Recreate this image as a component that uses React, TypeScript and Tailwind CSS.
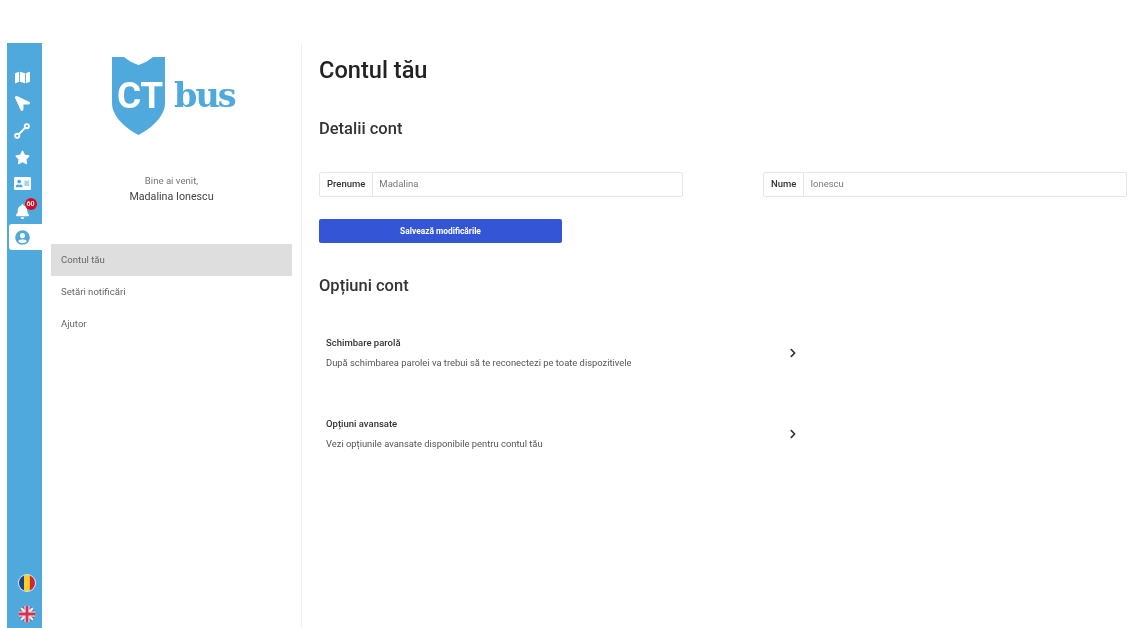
import { FaAddressCard, FaBell, FaChevronRight, FaLocationArrow, FaMap, FaStar, FaUserCircle } from "react-icons/fa";

function RouteIcon() {
  return (
    <svg viewBox="0 0 16 16" className="w-[16px] h-[16px]" fill="none" stroke="white" strokeWidth="1.9">
      <circle cx="3.2" cy="12.8" r="2.1" />
      <circle cx="12.800" cy="3.2" r="2.1" />
      <path d="M4.700 11.300 11.300 4.700" />
    </svg>
  );
}

function RomaniaFlag() {
  return (
    <svg viewBox="0 0 18 18" className="w-[18px] h-[18px]">
      <clipPath id="ro">
        <circle cx="9" cy="9" r="8" />
      </clipPath>
      <circle cx="9" cy="9" r="9" fill="#dbe8f2" />
      <g clipPath="url(#ro)">
        <rect x="0" y="0" width="6.2" height="18" fill="#1f3f8f" />
        <rect x="6.2" y="0" width="5.6" height="18" fill="#fbd116" />
        <rect x="11.8" y="0" width="6.2" height="18" fill="#d0263a" />
      </g>
    </svg>
  );
}

function UkFlag() {
  return (
    <svg viewBox="0 0 18 18" className="w-[18px] h-[18px]">
      <clipPath id="uk">
        <circle cx="9" cy="9" r="8.5" />
      </clipPath>
      <g clipPath="url(#uk)">
        <path d="M0 0 18 18M18 0 0 18" stroke="#3f6fb0" strokeWidth="5" />
        <path d="M0 0 18 18M18 0 0 18" stroke="#f3e4ea" strokeWidth="2.4" />
        <path d="M9 0V18M0 9H18" stroke="#f3e4ea" strokeWidth="5" />
        <path d="M9 0V18M0 9H18" stroke="#d8324a" strokeWidth="2.8" />
      </g>
    </svg>
  );
}

function Rail() {
  return (
    <aside className="w-[35px] shrink-0 bg-[#4fa9dd] flex flex-col items-center pt-[22px] pr-[5px] text-white">
      <div className="h-[25px] flex items-center"><FaMap size={15} /></div>
      <div className="h-[26px] flex items-center"><FaLocationArrow size={15} className="-rotate-90" /></div>
      <div className="h-[30px] flex items-center"><RouteIcon /></div>
      <div className="h-[22px] flex items-center"><FaStar size={15} /></div>
      <div className="h-[30px] flex items-center"><FaAddressCard size={17} /></div>
      <div className="relative h-[26px] flex items-center">
        <FaBell size={15} />
        <span className="absolute top-0 left-[10px] w-[12px] h-[12px] rounded-full bg-[#e2061c] text-white text-[7px] font-bold leading-[12px] text-center">60</span>
      </div>
      <div className="self-stretch ml-[2px] -mr-[5px] pr-[7px] h-[26px] bg-white rounded-l-[3px] flex items-center justify-center text-[#4fa9dd]">
        <FaUserCircle size={15} />
      </div>
      <div className="mt-auto mb-[5px] ml-[9px] flex flex-col items-center gap-[13px]">
        <RomaniaFlag />
        <UkFlag />
      </div>
    </aside>
  );
}

function Logo() {
  return (
    <div className="flex items-start pl-[61px]">
      <div className="relative w-[53px] h-[78px]">
        <svg viewBox="0 0 53 78" className="w-[53px] h-[78px]">
          <path d="M0 0 12 0 C16 3 20 6 26.500 8 C33 6 37 3 41 0 L53 0 V46 C53 60 38 72 26.500 78 C15 72 0 60 0 46Z" fill="#4fa9dd" />
        </svg>
        <span className="absolute left-[5px] top-[19px] text-white text-[37px] leading-[40px] font-bold tracking-[-0.5px] font-['Roboto',sans-serif]">CT</span>
      </div>
      <span className="ml-[9px] mt-[17px] text-[#4fa9dd] text-[33.500px] leading-[44px] font-bold tracking-[-2px] font-['DejaVu_Serif',serif]">bus</span>
    </div>
  );
}

function Sidebar() {
  return (
    <nav className="w-[260px] shrink-0 border-r border-[#f0f0f0] pt-[14px] pl-[9px] pr-[9px]">
      <Logo />
      <div className="mt-[38px] text-center">
        <p className="text-[9.600px] leading-[16px] text-[#777]">Bine ai venit,</p>
        <p className="-mt-[1px] text-[10.700px] leading-[18px] text-[#444]">Madalina Ionescu</p>
      </div>
      <ul className="mt-[38px] text-[9.600px] text-[#666]">
        <li className="h-[32px] flex items-center px-[10px] bg-[#dedede]">Contul tău</li>
        <li className="h-[32px] flex items-center px-[10px]">Setări notificări</li>
        <li className="h-[32px] flex items-center px-[10px]">Ajutor</li>
      </ul>
    </nav>
  );
}

function Field({ label, value }: { label: string; value: string }) {
  return (
    <div className="h-[25px] flex border border-[#e6e6e6] rounded-[2px] text-[9.500px]">
      <span className="px-[7px] flex items-center border-r border-[#e6e6e6] font-medium text-[#333]">{label}</span>
      <span className="px-[6px] flex items-center text-[#777]">{value}</span>
    </div>
  );
}

function OptionRow({ title, text }: { title: string; text: string }) {
  return (
    <div className="w-[479px] pl-[7px] flex items-center justify-between">
      <div>
        <p className="text-[9.500px] leading-[16px] font-medium text-[#333]">{title}</p>
        <p className="mt-[4px] text-[9.400px] leading-[16px] text-[#555]">{text}</p>
      </div>
      <FaChevronRight size={10} className="text-[#333]" />
    </div>
  );
}

export default function App() {
  return (
    <div className="h-[628px] w-[1137px] overflow-hidden bg-white pt-[43px] pl-[7px] flex font-['Roboto',sans-serif] blur-[0.5px]">
      <Rail />
      <Sidebar />
      <main className="flex-1 pl-[17px] pr-[10px]">
        <h1 className="mt-[9px] text-[23.600px] leading-[36px] font-medium text-[#222]">Contul tău</h1>
        <h2 className="mt-[29px] text-[16.500px] leading-[24px] font-medium text-[#333]">Detalii cont</h2>
        <div className="mt-[31px] grid grid-cols-2 gap-x-[80px]">
          <Field label="Prenume" value="Madalina" />
          <Field label="Nume" value="Ionescu" />
        </div>
        <button className="mt-[22px] block w-[243px] h-[24px] rounded-[2px] bg-[#3355d6] text-white text-[8.400px] font-bold">Salvează modificările</button>
        <h2 className="mt-[31px] text-[16.500px] leading-[24px] font-medium text-[#333]">Opțiuni cont</h2>
        <div className="mt-[37px] flex flex-col gap-[45px]">
          <OptionRow title="Schimbare parolă" text="După schimbarea parolei va trebui să te reconectezi pe toate dispozitivele" />
          <OptionRow title="Opțiuni avansate" text="Vezi opțiunile avansate disponibile pentru contul tău" />
        </div>
      </main>
    </div>
  );
}
